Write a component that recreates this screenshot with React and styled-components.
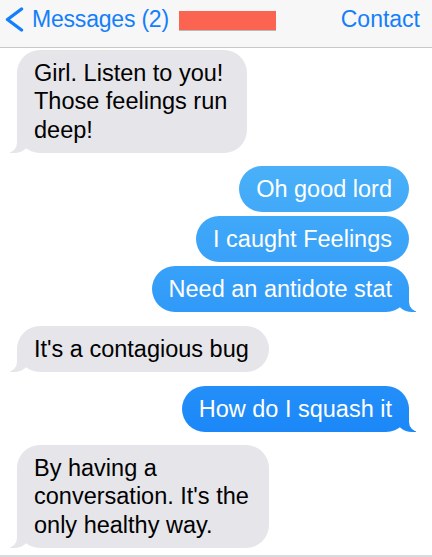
import React from 'react'
import styled, {createGlobalStyle, css} from 'styled-components';

const thread = [
    {fromMe: false, messages: ["Girl. Listen to you!\nThose feelings run\ndeep!"]},
    {fromMe: true, messages: ["Oh good lord", "I caught Feelings", "Need an antidote stat"]},
    {fromMe: false, messages: ["It's a contagious bug"]},
    {fromMe: true, messages: ["How do I squash it"]},
    {fromMe: false, messages: ["By having a\nconversation. It's the\nonly healthy way."]},
]

const App = () => {
    return (
        <Screen>
            <GlobalStyle/>
            <NavBar>
                <BackButton>
                    <svg width="22" height="26" viewBox="0 0 22 26">
                        <polyline points="17.5,2 3.5,12.5 17.5,23" fill="none" stroke="#157efb" strokeWidth="3.4"
                                  strokeLinecap="round" strokeLinejoin="round"/>
                    </svg>
                    <span>Messages (2)</span>
                </BackButton>
                {/* contact name blacked out in the screenshot */}
                <Redact/>
                <NavAction>Contact</NavAction>
            </NavBar>
            <Thread>
                {thread.map((group, i) => (
                    <Group key={i} fromMe={group.fromMe}>
                        {group.messages.map((text, j) => (
                            <Bubble key={j} fromMe={group.fromMe} tail={j === group.messages.length - 1}>
                                {text}
                            </Bubble>
                        ))}
                    </Group>
                ))}
            </Thread>
            <InputEdge/>
        </Screen>
    );
}

export default App;

const GlobalStyle = createGlobalStyle`
  body {
    margin: 0;
    background: #fff;
    overflow: hidden;
  }
`

const Screen = styled.div`
  height: 557px;
  display: flex;
  flex-direction: column;
  font-family: "Liberation Sans", Arial, sans-serif;
`

const NavBar = styled.div`
  height: 48px;
  flex-shrink: 0;
  box-sizing: border-box;
  display: flex;
  align-items: flex-start;
  padding: 7px 12px 0 4px;
  background: #f7f7f8;
  border-bottom: 1px solid #c8c8cc;
  color: #157efb;
  font-size: 23px;
  line-height: 24px;
`

const BackButton = styled.div`
  display: flex;
  align-items: flex-start;
  gap: 6px;
  letter-spacing: -0.2px;
`

const Redact = styled.div`
  margin: 4px 0 0 10px;
  width: 97px;
  height: 19px;
  background: #fa6450;
  box-shadow: 0 1px 0 #b9b9b9;
`

const NavAction = styled.div`
  margin-left: auto;
`

const Thread = styled.div`
  flex: 1;
  display: flex;
  flex-direction: column;
  gap: 13.5px;
  padding: 2px 23px 0 17px;
`

const Group = styled.div`
  display: flex;
  flex-direction: column;
  gap: 4px;
  align-items: ${props => props.fromMe ? 'flex-end' : 'flex-start'};
`

const blue = css`
  background: linear-gradient(to bottom, #66c9f9, #0675f8) fixed;
`

const Bubble = styled.div`
  position: relative;
  white-space: pre-line;
  padding: 9px 17px 9px 17px;
  border-radius: 23px;
  font-size: 23.5px;
  line-height: 28px;
  color: ${props => props.fromMe ? '#fff' : '#000'};
  ${props => props.fromMe ? blue : css`background: #e5e5ea; padding-right: 20px; line-height: 28.3px;`}

  ${props => props.tail && css`
    &::before {
      content: '';
      position: absolute;
      bottom: 0;
      ${props.fromMe ? 'right' : 'left'}: -7px;
      width: 20px;
      height: 25px;
      ${props.fromMe ? blue : css`background: #e5e5ea;`}
      ${props.fromMe ? 'border-bottom-left-radius' : 'border-bottom-right-radius'}: 16px 14px;
    }

    &::after {
      content: '';
      position: absolute;
      bottom: 0;
      ${props.fromMe ? 'right' : 'left'}: -26px;
      width: 26px;
      height: 25px;
      background: #fff;
      ${props.fromMe ? 'border-bottom-left-radius' : 'border-bottom-right-radius'}: 10px;
    }
  `}
`

const InputEdge = styled.div`
  height: 2px;
  flex-shrink: 0;
  background: #d9dadc;
`
